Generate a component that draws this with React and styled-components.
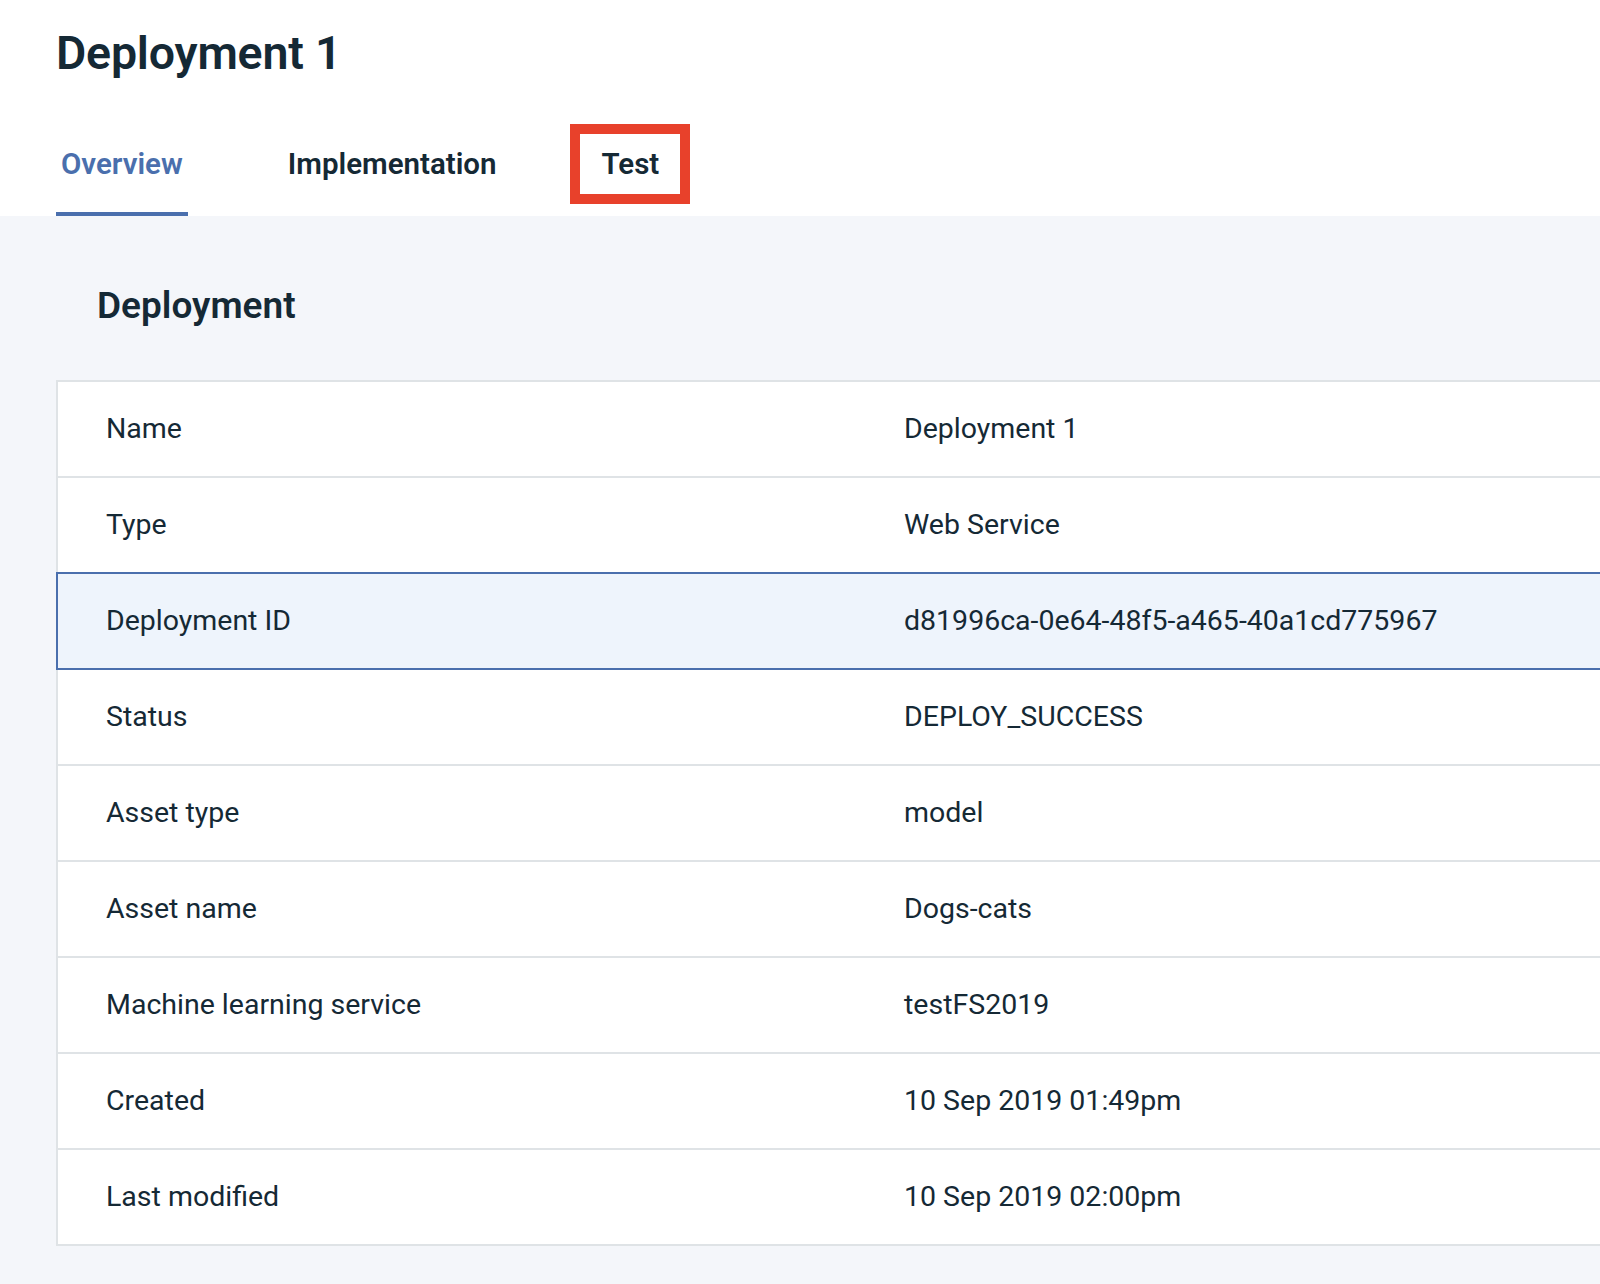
import React from "react";
import styled, { createGlobalStyle } from "styled-components";

const rows = [
  { label: "Name", value: "Deployment 1" },
  { label: "Type", value: "Web Service" },
  { label: "Deployment ID", value: "d81996ca-0e64-48f5-a465-40a1cd775967", active: true },
  { label: "Status", value: "DEPLOY_SUCCESS" },
  { label: "Asset type", value: "model" },
  { label: "Asset name", value: "Dogs-cats" },
  { label: "Machine learning service", value: "testFS2019" },
  { label: "Created", value: "10 Sep 2019 01:49pm" },
  { label: "Last modified", value: "10 Sep 2019 02:00pm" },
];

const tabs = ["Overview", "Implementation", "Test"];

function App() {
  return (
    <>
      <GlobalStyle />
      <Header>
        <Title>Deployment 1</Title>
        <TabList>
          {tabs.map((t, i) => (
            <Tab key={t} $active={i === 0} $marked={t === "Test"}>
              {t}
            </Tab>
          ))}
        </TabList>
      </Header>
      <Main>
        <SectionTitle>Deployment</SectionTitle>
        <Table>
          {rows.map((r, i) => (
            <Row key={r.label} $active={r.active} $noTop={i > 0 && rows[i - 1].active}>
              <Cell>{r.label}</Cell>
              <Cell>{r.value}</Cell>
            </Row>
          ))}
        </Table>
      </Main>
    </>
  );
}

////////////////////////////////////////////Styled-Components
const GlobalStyle = createGlobalStyle`
  html, body {
    margin: 0;
    padding: 0;
    background: #f4f6fa;
    overflow: hidden;
  }
  body {
    font-family: Roboto, "Noto Sans", sans-serif;
    color: #152935;
  }
`;

const Header = styled.header`
  display: flex;
  flex-direction: column;
  background: #fff;
  padding-left: 56px;
`;

const Title = styled.h1`
  margin: 25px 0 0;
  font-size: 46.5px;
  line-height: 56px;
  font-weight: 600;
  letter-spacing: -0.2px;
`;

const TabList = styled.nav`
  display: flex;
  gap: 95px;
  margin-top: 39px;
  height: 96px;
`;

const Tab = styled.div`
  position: relative;
  display: flex;
  align-items: center;
  padding: 0 5px 4px;
  font-size: 29.5px;
  font-weight: 600;
  color: ${(p) => (p.$active ? "#4a6fad" : "#152935")};
  border-bottom: 4px solid ${(p) => (p.$active ? "#4a6fad" : "transparent")};

  ${(p) =>
    p.$marked &&
    `
    &::after {
      content: "";
      position: absolute;
      top: 4px;
      bottom: 8px;
      left: -27px;
      right: -26px;
      border: 10px solid #e8412b;
    }
  `}
`;

const Main = styled.main`
  padding: 0 0 40px 56px;
`;

const SectionTitle = styled.h2`
  margin: 0;
  padding: 67px 0 0 41px;
  height: 98px;
  font-size: 37px;
  line-height: 46px;
  font-weight: 600;
  box-sizing: border-box;
`;

const Table = styled.div`
  margin-top: 66px;
  border-bottom: 2px solid #dfe3e6;
  background: #fff;
`;

const Row = styled.div`
  display: grid;
  grid-template-columns: 798px 1fr;
  align-items: center;
  height: 94px;
  padding-left: 48px;
  border-left: 2px solid ${(p) => (p.$active ? "#4a6fad" : "#dfe3e6")};
  border-top: ${(p) => (p.$noTop ? "none" : `2px solid ${p.$active ? "#4a6fad" : "#dfe3e6"}`)};
  border-bottom: ${(p) => (p.$active ? "2px solid #4a6fad" : "none")};
  background: ${(p) => (p.$active ? "#eef4fc" : "#fff")};
`;

const Cell = styled.div`
  font-size: 28.5px;
  line-height: 36px;
  white-space: nowrap;
`;

export default App;
